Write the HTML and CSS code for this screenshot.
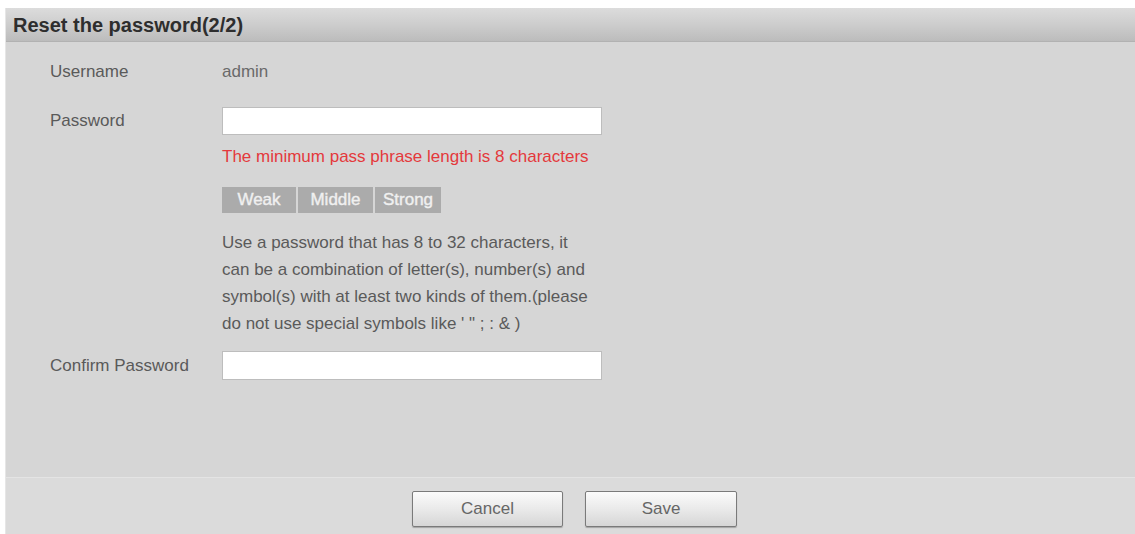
FILE: index.html
```html
<!DOCTYPE html>
<html>
<head>
<meta charset="utf-8">
<link rel="stylesheet" href="styles.css">
</head>
<body>
<div class="caption"></div>
<div class="panel">
  <div class="header">Reset the password(2/2)</div>
  <div class="content">
    <div class="row row-user">
      <div class="label">Username</div>
      <div class="value">admin</div>
    </div>
    <div class="row row-pass">
      <div class="label">Password</div>
      <div class="value"><div class="input"></div></div>
    </div>
    <div class="row row-err">
      <div class="label"></div>
      <div class="value err">The minimum pass phrase length is 8 characters</div>
    </div>
    <div class="row row-strength">
      <div class="label"></div>
      <div class="value strength">
        <span class="seg s1">Weak</span><span class="seg s2">Middle</span><span class="seg s3">Strong</span>
      </div>
    </div>
    <div class="row row-help">
      <div class="label"></div>
      <div class="value help">Use a password that has 8 to 32 characters, it<br>can be a combination of letter(s), number(s) and<br>symbol(s) with at least two kinds of them.(please<br>do not use special symbols like ' " ; : &amp; )</div>
    </div>
    <div class="row row-confirm">
      <div class="label">Confirm Password</div>
      <div class="value"><div class="input input-c"></div></div>
    </div>
  </div>
  <div class="footer">
    <button class="btn btn-cancel">Cancel</button>
    <button class="btn btn-save">Save</button>
  </div>
</div>
</body>
</html>
```

FILE: styles.css
```css
html, body {
  margin: 0;
  padding: 0;
  background: #ffffff;
  font-family: "Liberation Sans", Arial, sans-serif;
}
body {
  width: 1135px;
  height: 534px;
  overflow: hidden;
}
.caption {
  height: 8px;
}
.panel {
  margin-left: 5px;
  height: 526px;
  display: flex;
  flex-direction: column;
  background: #d6d6d6;
  border-left: 1px solid #e6e6e6;
}
.header {
  height: 33px;
  line-height: 34px;
  padding-left: 7px;
  font-size: 20px;
  font-weight: bold;
  color: #2e2e2e;
  background: linear-gradient(#dcdcdc, #cdcdcd 50%, #bcbcbc);
  border-bottom: 1px solid #b2b2b2;
}
.content {
  flex: 1;
  display: flex;
  flex-direction: column;
  padding-left: 44px;
}
.row {
  display: flex;
  align-items: center;
}
.label {
  width: 172px;
  flex: none;
  font-size: 17px;
  color: #5a5a5a;
}
.value {
  font-size: 17px;
  color: #6a6a6a;
}
.row-user { margin-top: 19px; height: 22px; }
.row-pass { margin-top: 24px; }
.input {
  width: 378px;
  height: 26px;
  background: #fff;
  border: 1px solid #bdbdbd;
}
.input-c { height: 27px; }
.row-err { margin-top: 11px; height: 22px; }
.err { color: #e4393c; }
.row-strength { margin-top: 19px; }
.strength {
  display: flex;
  gap: 2px;
}
.seg {
  height: 26px;
  line-height: 26px;
  background: #ababab;
  color: #f0f0f0;
  text-align: center;
  font-size: 17px;
  -webkit-text-stroke: 0.4px #f0f0f0;
}
.s1 { width: 74px; }
.s2 { width: 75px; }
.s3 { width: 66px; }
.row-help { margin-top: 16px; }
.help {
  line-height: 27px;
  color: #5a5a5a;
}
.row-confirm { margin-top: 14px; }
.footer {
  height: 57px;
  flex: none;
  border-top: 1px solid #e4e4e4;
  background: #dbdbdb;
  display: flex;
  justify-content: center;
  align-items: flex-start;
  gap: 22px;
  padding-top: 13px;
  box-sizing: border-box;
  padding-left: 8px;
}
.btn {
  height: 36px;
  border: 1px solid #7a7a7a;
  border-radius: 2px;
  background: linear-gradient(#fbfbfb, #e8e8e8 55%, #d6d6d6);
  font-family: "Liberation Sans", Arial, sans-serif;
  font-size: 17px;
  color: #666;
  box-shadow: 0 1px 1px rgba(0,0,0,0.25);
}
.btn-cancel { width: 151px; }
.btn-save { width: 152px; }
```
